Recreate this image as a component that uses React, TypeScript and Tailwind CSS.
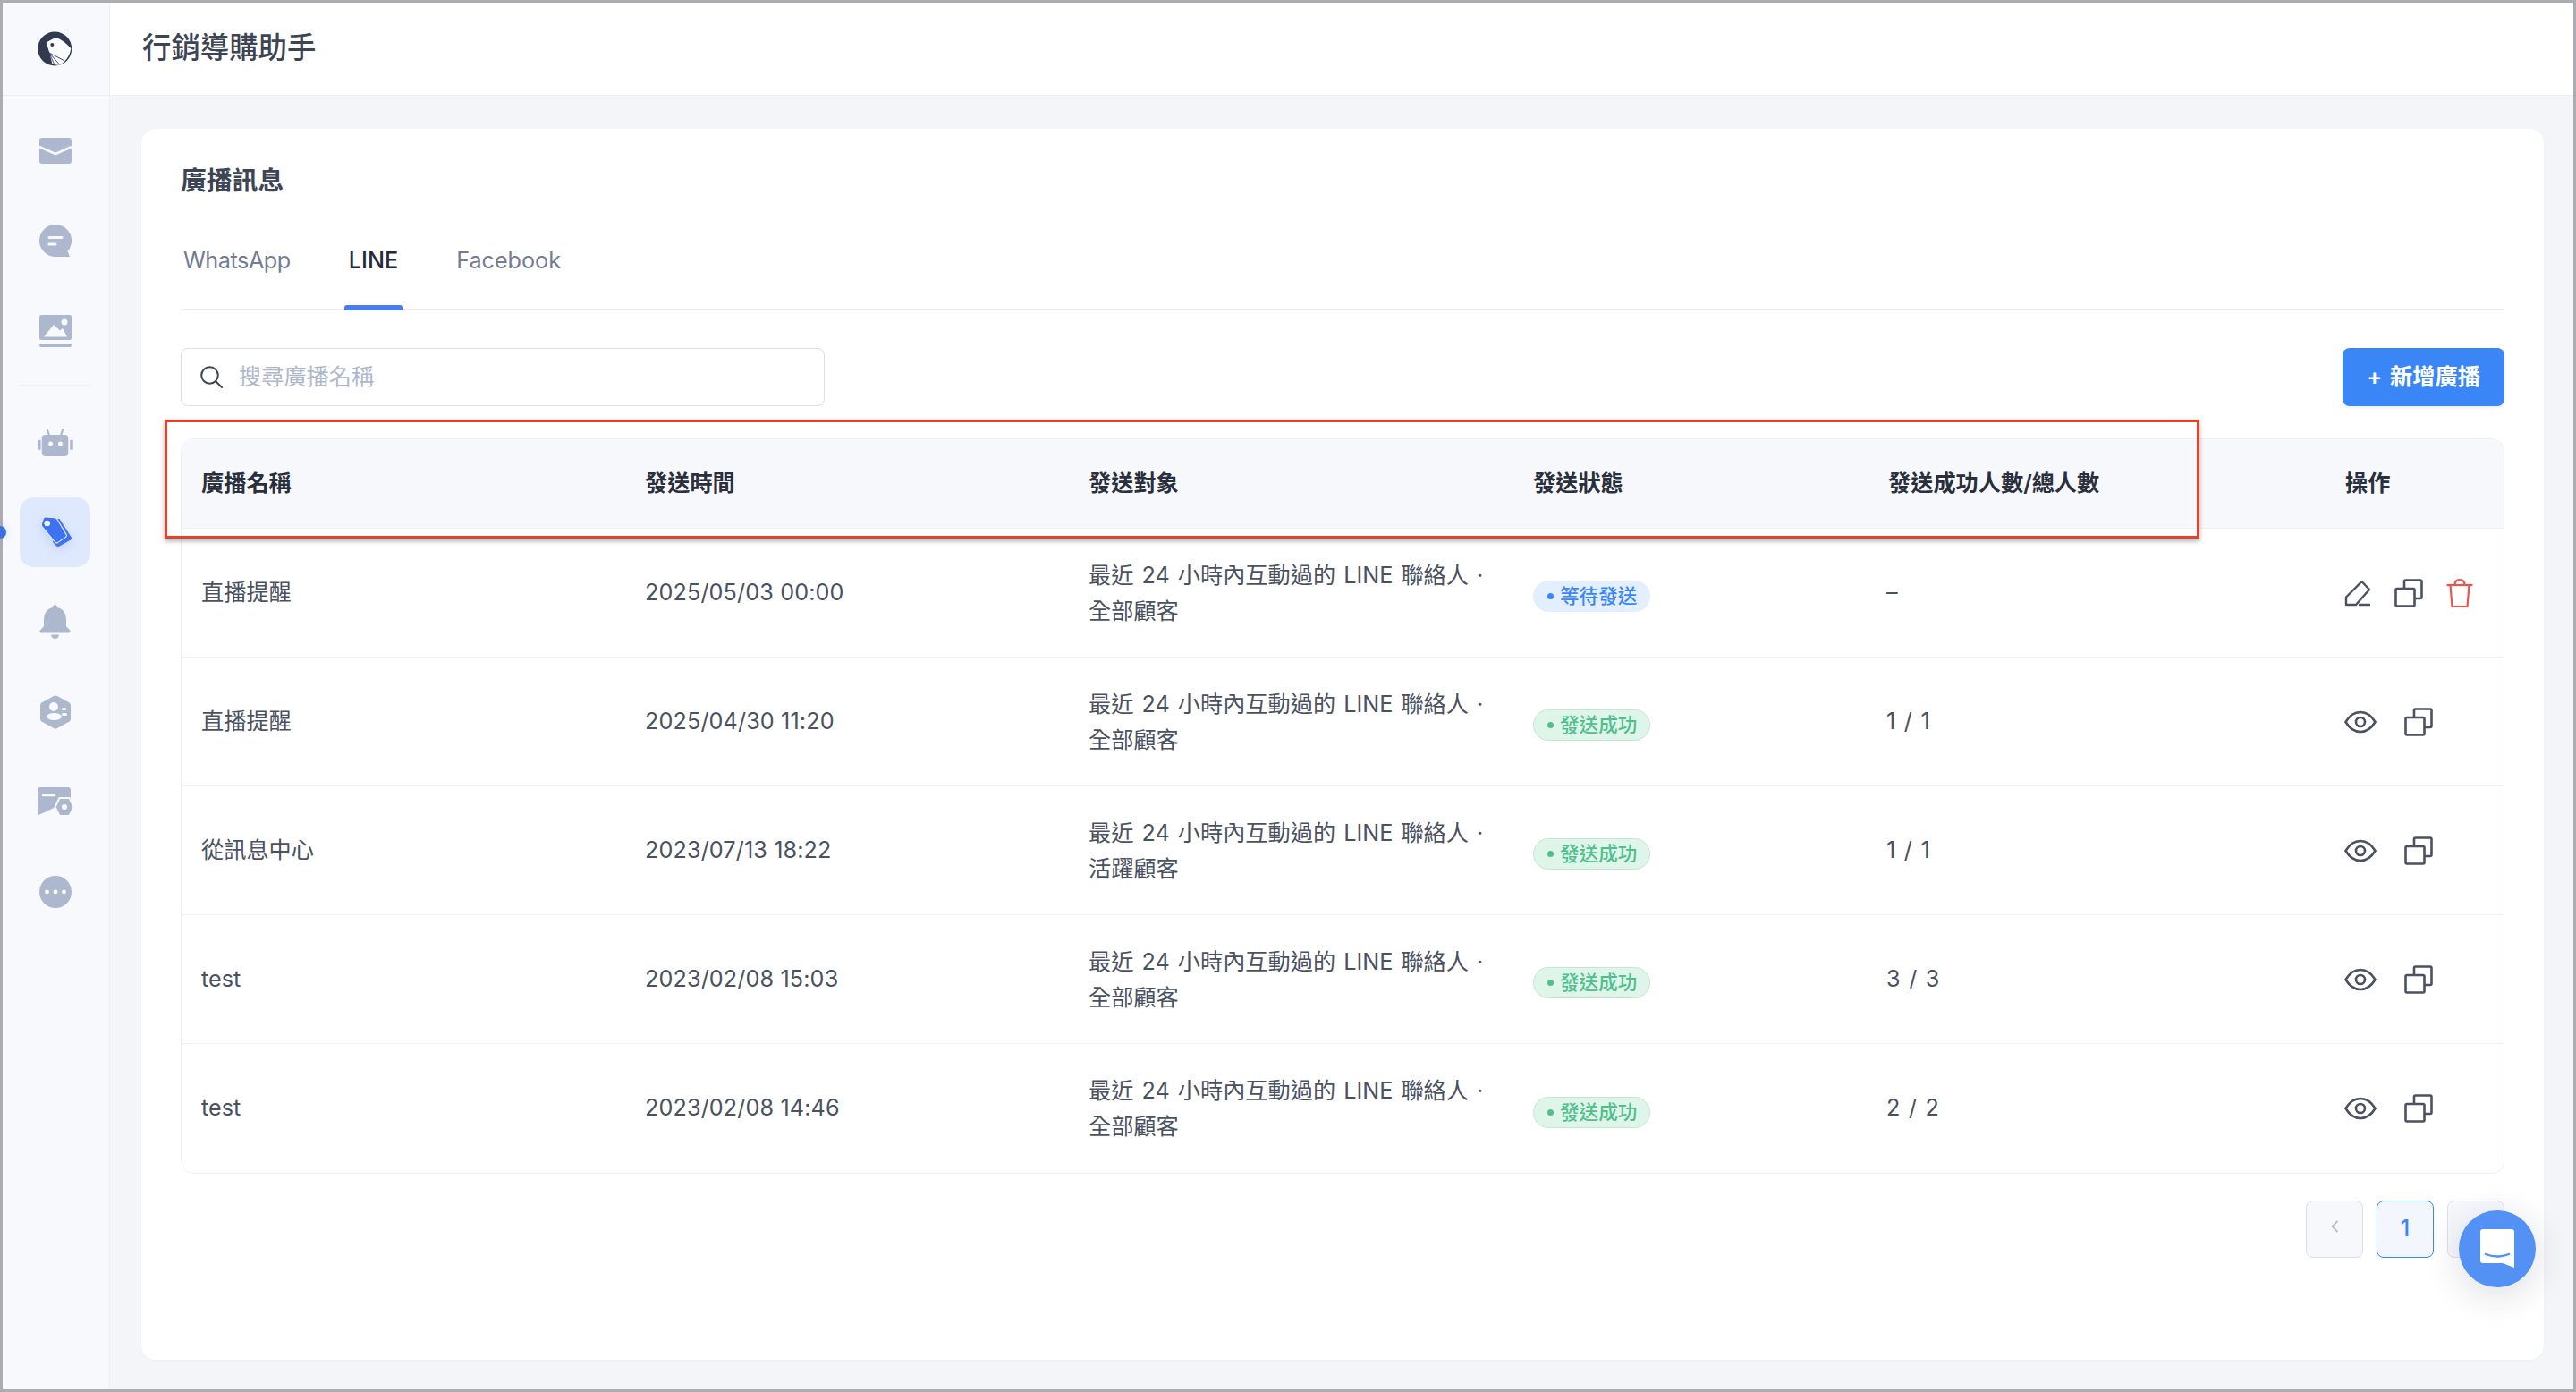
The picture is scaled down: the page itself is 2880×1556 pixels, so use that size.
import type { ReactNode } from "react";

const rows = [
  { name: "直播提醒", time: "2025/05/03 00:00", group: "全部顧客", status: "wait", count: "–" },
  { name: "直播提醒", time: "2025/04/30 11:20", group: "全部顧客", status: "ok", count: "1 / 1" },
  { name: "從訊息中心", time: "2023/07/13 18:22", group: "活躍顧客", status: "ok", count: "1 / 1" },
  { name: "test", time: "2023/02/08 15:03", group: "全部顧客", status: "ok", count: "3 / 3" },
  { name: "test", time: "2023/02/08 14:46", group: "全部顧客", status: "ok", count: "2 / 2" },
];

const gridCols = "grid grid-cols-[496px_496px_497px_397px_511px_1fr] pl-[22px]";
const navBg = "#f7f9fd";

function Logo() {
  return (
    <svg width="39" height="39" viewBox="0 0 39 39">
      <circle cx="19.2" cy="19.5" r="19" fill="#323a50" />
      <path d="M9.7 12.7 C13 10.5 17 8 21.3 7 C27 9.5 33 14 37.3 19.3 C36.5 25 33.5 30.5 29.7 34 C27.5 36 25 37.5 23 37.7 C21 37.8 18.5 37 16.3 36 L13 23 Z" fill="#fbfcfd" />
      <circle cx="16.3" cy="15" r="2" fill="#323a50" />
      <path d="M13 24 L29.7 32.7 M13 24 L24 36.5 M13 24 L18.5 36.5" stroke="#323a50" strokeWidth="0.9" />
    </svg>
  );
}

function MailIcon() {
  return (
    <svg width="36" height="29" viewBox="0 0 36 29">
      <rect width="36" height="29" rx="3" fill="#adb8cf" />
      <path d="M0 10 L18 18 L36 10" fill="none" stroke={navBg} strokeWidth="2.6" />
    </svg>
  );
}

function ChatIcon() {
  return (
    <svg width="36" height="36" viewBox="0 0 36 36">
      <path d="M18 0 A18 18 0 1 0 18 36 H34 L31.5 30 A18 18 0 0 0 18 0 Z" fill="#adb8cf" />
      <path d="M11 14.5 H25 M11 22 H18" stroke={navBg} strokeWidth="3" strokeLinecap="round" />
    </svg>
  );
}

function ImageIcon() {
  return (
    <svg width="36" height="36" viewBox="0 0 36 36">
      <rect width="36" height="28" rx="2" fill="#adb8cf" />
      <rect y="32" width="36" height="4" rx="2" fill="#adb8cf" />
      <path d="M5 24.5 L16 11 L23 17.5 L26 15 L31 24.5 Z" fill={navBg} />
      <circle cx="28" cy="8" r="3.5" fill={navBg} />
    </svg>
  );
}

function RobotIcon() {
  return (
    <svg width="40" height="31" viewBox="0 0 40 31">
      <rect x="4.7" y="7" width="29.6" height="24" rx="4" fill="#adb8cf" />
      <rect y="12.7" width="3.6" height="11" rx="1" fill="#adb8cf" />
      <rect x="36.2" y="12.7" width="3.6" height="11" rx="1" fill="#adb8cf" />
      <path d="M10.7 0.5 L13 8 M28.3 0.5 L26 8" stroke="#adb8cf" strokeWidth="2.2" strokeLinecap="round" />
      <circle cx="14.5" cy="17" r="2.5" fill={navBg} />
      <circle cx="25.5" cy="17" r="2.5" fill={navBg} />
    </svg>
  );
}

function TagIcon() {
  return (
    <svg width="36" height="35" viewBox="0 0 36 35" className="drop-shadow-[0_4px_6px_rgba(60,110,240,0.18)]">
      <path d="M20 3 L22.5 3 L36 24 Q36.3 25.8 35 26.6 L22 33.7 Q20.5 34.5 19 33.2 L15 29 Z" fill="#3f72f0" />
      <path d="M2.6 7.5 L4.6 2.2 Q5.2 0.8 6.8 0.9 L17.5 1.8 Q19 2 19.8 3.3 L30.2 20.6 Q31 22.2 29.6 23.2 L20.8 29.4 Q19 30.4 17.6 29 L3 11.5 Q2 10 2.6 7.5 Z" fill="#3d72f2" stroke="#e7effe" strokeWidth="1.1" />
      <circle cx="8.7" cy="8" r="3.3" fill="#f2f6ff" />
    </svg>
  );
}

function BellIcon() {
  return (
    <svg width="35" height="39" viewBox="0 0 35 39">
      <path d="M17.5 0 Q20 0 20 3 C27 4.5 30 10 30 17 V24 L34.5 29 Q35.5 31 33 31.5 H2 Q-0.5 31 0.5 29 L5 24 V17 C5 10 8 4.5 15 3 Q15 0 17.5 0 Z" fill="#adb8cf" />
      <path d="M13 33.5 H22 Q21 38 17.5 38 Q14 38 13 33.5 Z" fill="#adb8cf" />
    </svg>
  );
}

function HexIcon() {
  return (
    <svg width="34" height="38" viewBox="0 0 34 38">
      <path d="M15 1 Q17 0 19 1 L32.5 8.5 Q34 9.5 34 11.5 V26.5 Q34 28.5 32.5 29.5 L19 37 Q17 38 15 37 L1.5 29.5 Q0 28.5 0 26.5 V11.5 Q0 9.5 1.5 8.5 Z" fill="#adb8cf" />
      <circle cx="15" cy="13" r="5" fill={navBg} />
      <ellipse cx="15.5" cy="24" rx="8.5" ry="4" fill={navBg} />
      <rect x="24" y="14" width="5" height="3" rx="1.5" fill={navBg} />
      <rect x="24" y="20" width="6" height="3" rx="1.5" fill={navBg} />
    </svg>
  );
}

function MsgGearIcon() {
  return (
    <svg width="40" height="32" viewBox="0 0 40 32">
      <path d="M3 0 H34 Q37 0 37 3 V22 H20 L8 28 L1 31 Q0 31 0 30 V3 Q0 0 3 0 Z" fill="#adb8cf" />
      <path d="M6 9 H19" stroke={navBg} strokeWidth="2.6" strokeLinecap="round" />
      <path d="M24.5 12 H35.5 L40.5 22 L35.5 32 H24.5 L19.5 22 Z" fill="#adb8cf" stroke={navBg} strokeWidth="2" />
      <circle cx="30" cy="22" r="3" fill={navBg} />
    </svg>
  );
}

function DotsIcon() {
  return (
    <svg width="36" height="36" viewBox="0 0 36 36">
      <circle cx="18" cy="18" r="18" fill="#adb8cf" />
      <circle cx="8.5" cy="18" r="2.4" fill={navBg} />
      <circle cx="18" cy="18" r="2.4" fill={navBg} />
      <circle cx="27.5" cy="18" r="2.4" fill={navBg} />
    </svg>
  );
}

function SearchIcon() {
  return (
    <svg width="25" height="25" viewBox="0 0 25 25" fill="none" stroke="#3d4454" strokeWidth="2">
      <circle cx="10.5" cy="10.5" r="9.3" />
      <path d="M17.3 17.3 L24 24" strokeLinecap="round" />
    </svg>
  );
}

function PencilIcon() {
  return (
    <svg width="30" height="30" viewBox="0 0 30 30" fill="none" stroke="#4a5161" strokeWidth="2.4" strokeLinejoin="round" strokeLinecap="round">
      <path d="M19.5 2 L28 11 L13 28 H2 V19.5 Z" />
      <path d="M17 28 H28" />
    </svg>
  );
}

function CopyIcon() {
  return (
    <svg width="32" height="32" viewBox="0 0 32 32" fill="none" stroke="#4a5161" strokeWidth="2.6" strokeLinejoin="round">
      <rect x="1.5" y="11" width="21" height="19.5" rx="1.5" />
      <path d="M11 11 V3 Q11 1.5 12.5 1.5 H29 Q30.5 1.5 30.5 3 V20.5 Q30.5 22 29 22 H22.5" />
    </svg>
  );
}

function TrashIcon() {
  return (
    <svg width="30" height="32" viewBox="0 0 30 32" fill="none" stroke="#ef5350" strokeWidth="2.2" strokeLinejoin="round">
      <path d="M0.5 7 H29.5" />
      <path d="M9.5 7 C9.5 3 12 1.2 15 1.2 C18 1.2 20.5 3 20.5 7" />
      <path d="M4.5 7 L6.5 31 H23.5 L25.5 7" />
    </svg>
  );
}

function EyeIcon() {
  return (
    <svg width="36" height="26" viewBox="0 0 36 26" fill="none" stroke="#4a5161" strokeWidth="2.6">
      <path d="M1.5 13 C6 5.5 11 2 18 2 C25 2 30 5.5 34.5 13 C30 20.5 25 24 18 24 C11 24 6 20.5 1.5 13 Z" />
      <circle cx="18" cy="13" r="5" />
    </svg>
  );
}

function NavItem({ children, active }: { children: ReactNode; active?: boolean }) {
  return (
    <div className={`flex h-[78px] w-[79px] items-center justify-center rounded-[16px] ${active ? "bg-[#dfe9fd]" : ""}`}>
      {children}
    </div>
  );
}

function StatusPill({ status }: { status: string }) {
  const wait = status === "wait";
  return (
    <span
      className={`mt-[8px] inline-flex h-[35px] w-[131px] items-center gap-[7px] rounded-full border pl-[15px] text-[21.6px] font-medium ${
        wait ? "border-[#e3eeff] bg-[#e3eeff] text-[#3b86f7]" : "border-[#bfe9d3] bg-[#dff5ea] text-[#4fbf8b]"
      }`}
    >
      <span className={`h-[7px] w-[7px] rounded-full ${wait ? "bg-[#3b86f7]" : "bg-[#4fbf8b]"}`} />
      {wait ? "等待發送" : "發送成功"}
    </span>
  );
}

export default function App() {
  return (
    <div className="relative flex h-screen w-full border-[3px] border-[#acadb2] bg-[#f3f5f9] font-['Inter','Noto_Sans_CJK_TC',sans-serif] text-[25.2px] text-[#4a5161]">
      {/* sidebar */}
      <aside className="flex w-[120px] shrink-0 flex-col items-center border-r border-[#eceef3] bg-[#f7f9fd]">
        <div className="flex h-[104px] w-full items-center justify-center border-b border-[#eceef3] pr-[2px]">
          <Logo />
        </div>
        <div className="mr-[2px] mt-[22px] flex flex-col gap-[23px]">
          <NavItem><MailIcon /></NavItem>
          <NavItem><ChatIcon /></NavItem>
          <NavItem><ImageIcon /></NavItem>
        </div>
        <div className="mr-[2px] mt-[21px] h-[2px] w-[79px] bg-[#eceef3]" />
        <div className="mr-[2px] mt-[23px] flex flex-col gap-[22.5px]">
          <NavItem><RobotIcon /></NavItem>
          <NavItem active><TagIcon /></NavItem>
          <NavItem><BellIcon /></NavItem>
          <NavItem><HexIcon /></NavItem>
          <NavItem><MsgGearIcon /></NavItem>
          <NavItem><DotsIcon /></NavItem>
        </div>
      </aside>

      <div className="flex min-w-0 flex-1 flex-col">
        <header className="flex h-[104px] shrink-0 items-center border-b border-[#eceef3] bg-white pl-[36px] text-[32.4px] font-medium text-[#3d4454]">
          行銷導購助手
        </header>

        <main className="flex-1 pb-[33px] pl-[35px] pr-[33px] pt-[37px]">
          <section className="h-full rounded-[16px] bg-white px-[44px] pt-[38px] shadow-[0_1px_3px_rgba(40,50,80,0.03)]">
            <h1 className="text-[28.8px] font-semibold leading-[40px] text-[#3d4454]">廣播訊息</h1>

            {/* tabs */}
            <div className="mt-[30px] flex h-[94px] gap-[57px] border-b border-[#eceef3] pt-[19px] leading-[40px]">
              <span className="px-[3px] tracking-[-0.45px] text-[#737c92]">WhatsApp</span>
              <span className="relative h-[75px] px-[5px] font-medium text-[#252a37]">
                LINE
                <span className="absolute inset-x-0 bottom-[-1px] h-[6px] rounded-t-[3px] bg-[#4a7cf0]" />
              </span>
              <span className="px-[3px] text-[#737c92]">Facebook</span>
            </div>

            {/* toolbar */}
            <div className="mt-[43px] flex items-center justify-between">
              <div className="flex h-[65px] w-[720px] items-center gap-[18px] rounded-[8px] border-[1.5px] border-[#dcdfe9] pl-[21px]">
                <SearchIcon />
                <span className="text-[#aeb8cc]">搜尋廣播名稱</span>
              </div>
              <button className="flex h-[65px] w-[181px] items-center justify-center gap-[9px] rounded-[8px] bg-[#3b86f7] font-semibold text-white shadow-[0_2px_3px_rgba(40,50,80,0.08)]">
                <span>+</span>
                <span>新增廣播</span>
              </button>
            </div>

            {/* table */}
            <div className="mt-[36px] overflow-hidden rounded-[14px] border border-[#eef0f5]">
              <div className={`${gridCols} h-[100px] items-center border-b border-[#eef0f5] bg-[#f6f8fc] font-semibold text-[#2a2f3c]`}>
                <span>廣播名稱</span>
                <span>發送時間</span>
                <span>發送對象</span>
                <span>發送狀態</span>
                <span>發送成功人數/總人數</span>
                <span>操作</span>
              </div>
              {rows.map((r, i) => (
                <div key={i} className={`${gridCols} h-[144px] items-center ${i < rows.length - 1 ? "border-b border-[#eff1f6]" : ""}`}>
                  <span>{r.name}</span>
                  <span className="tracking-[0.12px]">{r.time}</span>
                  <div className="leading-[40px]">
                    <div className="[word-spacing:2px]">最近 24 小時內互動過的 LINE 聯絡人 ·</div>
                    <div>{r.group}</div>
                  </div>
                  <div><StatusPill status={r.status} /></div>
                  <span className="ml-[-2px] [word-spacing:2.5px]">{r.count}</span>
                  {r.status === "wait" ? (
                    <div className="ml-[-1px] flex items-center gap-[26px]">
                      <PencilIcon />
                      <CopyIcon />
                      <TrashIcon />
                    </div>
                  ) : (
                    <div className="ml-[-1px] flex items-center gap-[31px]">
                      <EyeIcon />
                      <CopyIcon />
                    </div>
                  )}
                </div>
              ))}
            </div>

            {/* pagination */}
            <div className="mt-[30px] flex justify-end gap-[15px]">
              <div className="flex h-[64px] w-[64px] items-center justify-center rounded-[8px] border-[1.5px] border-[#dcdfe9] bg-[#f6f8fc] pb-[6px]">
                <svg width="9" height="14" viewBox="0 0 9 14" fill="none" stroke="#b4bdd0" strokeWidth="1.8">
                  <path d="M7.5 1 L1.5 7 L7.5 13" />
                </svg>
              </div>
              <div className="flex h-[64px] w-[64px] items-center justify-center rounded-[8px] border-[1.5px] border-[#3b86f7] bg-[#f3f7fd] font-medium text-[#3b86f7]">
                1
              </div>
              <div className="h-[64px] w-[64px] rounded-[8px] border-[1.5px] border-[#dcdfe9] bg-[#f6f8fc]" />
            </div>
          </section>
        </main>
      </div>

      {/* floating chat button */}
      <div className="absolute left-[2746px] top-[1350px] flex h-[86px] w-[86px] items-center justify-center rounded-full bg-[#5391f5] shadow-[0_8px_40px_rgba(30,40,70,0.16)]">
        <svg width="38" height="44" viewBox="0 0 38 44">
          <path d="M3 0 H35 Q38 0 38 3 V43 L25 38 H3 Q0 38 0 35 V3 Q0 0 3 0 Z" fill="#ffffff" />
          <path d="M6 28 Q19 33 32 28" fill="none" stroke="#5391f5" strokeWidth="2.4" strokeLinecap="round" />
        </svg>
      </div>

      {/* active nav marker */}
      <div className="absolute left-[-10px] top-[585px] h-[14px] w-[14px] rounded-full bg-[#3b6fe0] shadow-[0_0_8px_rgba(59,111,224,0.25)]" />

      {/* annotation */}
      <div className="absolute left-[181px] top-[465.5px] h-[133.5px] w-[2274.5px] border-[3.5px] border-[#e8412a] shadow-[0_3px_5px_rgba(0,0,0,0.3)]" />
    </div>
  );
}
